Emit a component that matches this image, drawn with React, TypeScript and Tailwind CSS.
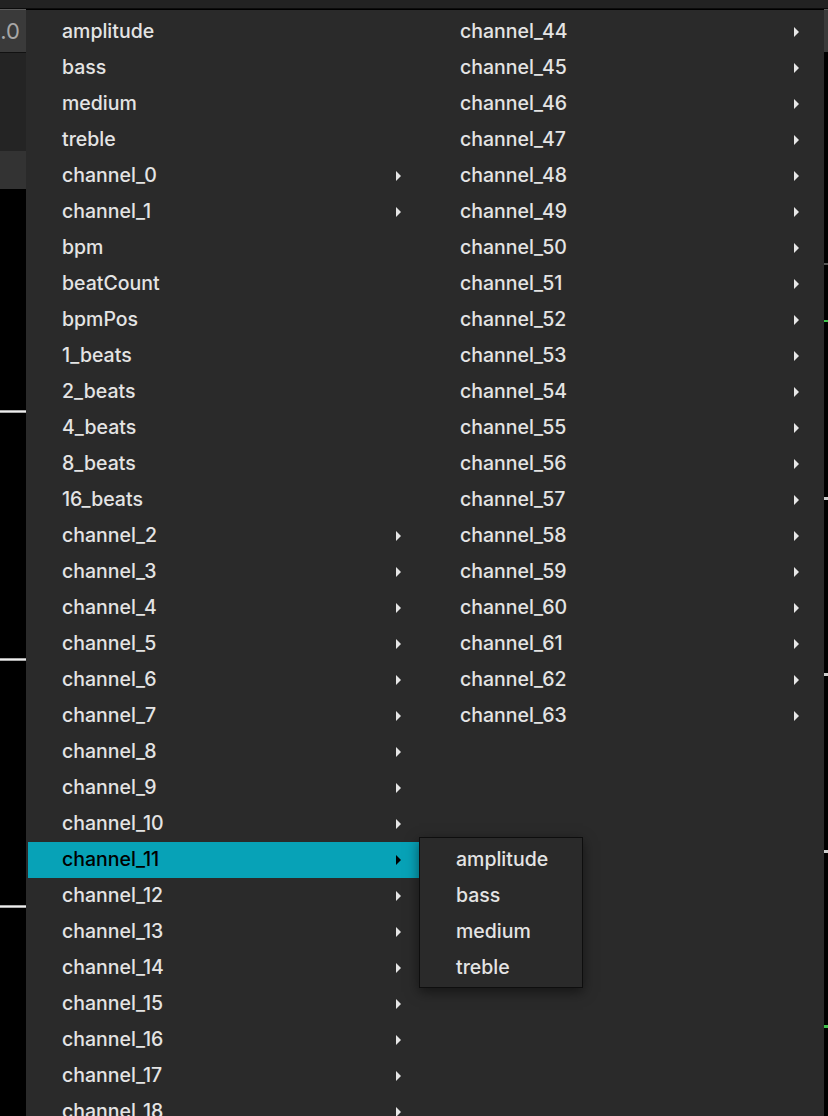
import React from "react";

type Item = { label: string; sub?: boolean };

const head: Item[] = [
  { label: "amplitude" },
  { label: "bass" },
  { label: "medium" },
  { label: "treble" },
  { label: "channel_0", sub: true },
  { label: "channel_1", sub: true },
  { label: "bpm" },
  { label: "beatCount" },
  { label: "bpmPos" },
  { label: "1_beats" },
  { label: "2_beats" },
  { label: "4_beats" },
  { label: "8_beats" },
  { label: "16_beats" },
];

const channels = (from: number, to: number): Item[] =>
  Array.from({ length: to - from + 1 }, (_, i) => ({ label: `channel_${from + i}`, sub: true }));

const leftItems = [...head, ...channels(2, 43)];
const rightItems = channels(44, 63);
const subItems = ["amplitude", "bass", "medium", "treble"];

const font = { fontFamily: "Inter, 'Liberation Sans', sans-serif" };

function Caret({ dark }: { dark?: boolean }) {
  return (
    <svg width="5" height="10" viewBox="0 0 5 10" className="shrink-0">
      <path d="M0 0 L5 5 L0 10 Z" fill={dark ? "#000" : "#e6e6e6"} />
    </svg>
  );
}

function Row({ item, active }: { item: Item; active?: boolean }) {
  return (
    <div
      className={
        "flex h-[36px] items-center justify-between pl-[34px] pr-[25px] " +
        (active ? "bg-[#07a2b7] text-black" : "text-[#e4e4e4]")
      }
    >
      <span>{item.label}</span>
      {item.sub && <Caret dark={active} />}
    </div>
  );
}

export default function App() {
  return (
    <div className="relative h-[1116px] w-[828px] overflow-hidden bg-black" style={font}>
      {/* underlying editor */}
      <div className="h-[9px] border-b border-[#0c0c0c] bg-[#222]" />
      <div className="flex h-[1107px]">
        <div className="flex w-[26px] flex-col">
          <div className="flex h-[43px] items-center justify-end overflow-hidden border-t border-[#5c5c5c] bg-[#3a3a3a] pr-[6px] text-[22px] text-[#a8a8a8]">
            1.0
          </div>
          <div className="h-[99px] border-t border-[#111] bg-[#242424]" />
          <div className="h-[38px] bg-[#333]" />
          <div className="flex flex-col">
            <div className="h-[221px]" />
            <div className="h-[3px] bg-gradient-to-b from-[#888] via-[#eee] to-[#888]" />
            <div className="h-[245px]" />
            <div className="h-[3px] bg-gradient-to-b from-[#888] via-[#eee] to-[#888]" />
            <div className="h-[244px]" />
            <div className="h-[3px] bg-gradient-to-b from-[#888] via-[#eee] to-[#888]" />
          </div>
        </div>
        <div className="flex-1" />
        <div className="flex w-[4px] flex-col">
          <div className="h-[43px] border-t border-[#5c5c5c] bg-[#3a3a3a]" />
          <div className="h-[211px]" />
          <div className="h-[2px] bg-[#555]" />
          <div className="h-[55px]" />
          <div className="h-[2px] bg-[#3fbf4a]" />
          <div className="h-[175px]" />
          <div className="h-[3px] bg-[#ccc]" />
          <div className="h-[173px]" />
          <div className="h-[3px] bg-[#ccc]" />
          <div className="h-[174px]" />
          <div className="h-[3px] bg-[#ccc]" />
          <div className="h-[172px]" />
          <div className="h-[3px] bg-[#3fbf4a]" />
        </div>
      </div>

      {/* popup menu */}
      <div className="absolute left-[26px] top-[10px] flex w-[798px] bg-[#2a2a2a] pl-[2px] pt-[4px] text-[19.5px] font-medium">
        <div className="w-[398px]">
          {leftItems.map((it) => (
            <Row key={it.label} item={it} active={it.label === "channel_11"} />
          ))}
        </div>
        <div className="w-[398px] self-start">
          {rightItems.map((it) => (
            <Row key={it.label} item={it} />
          ))}
        </div>
      </div>

      {/* submenu for channel_11 */}
      <div className="absolute left-[419px] top-[837px] w-[164px] border border-[#0e0e0e] bg-[#2a2a2a] pb-[1px] pt-[4px] text-[19.5px] font-medium text-[#e4e4e4] shadow-[0_4px_12px_rgba(0,0,0,0.5)]">
        {subItems.map((s) => (
          <div key={s} className="flex h-[36px] items-center pl-[36px]">
            {s}
          </div>
        ))}
      </div>
    </div>
  );
}
